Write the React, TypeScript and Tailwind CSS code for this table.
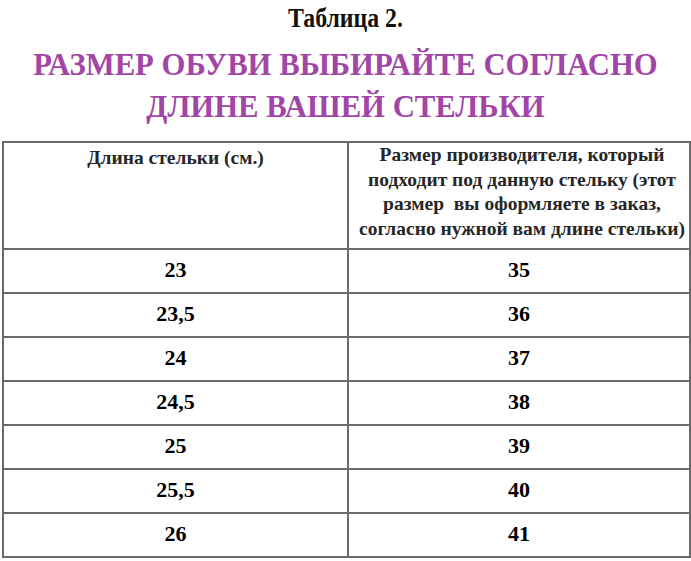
const rows: [string, string][] = [
  ["23", "35"],
  ["23,5", "36"],
  ["24", "37"],
  ["24,5", "38"],
  ["25", "39"],
  ["25,5", "40"],
  ["26", "41"],
];

export default function App() {
  return (
    <div className="w-[691px] h-[561px] overflow-hidden bg-white font-bold">
      <div className="font-[Liberation_Serif,serif]">
        <h1 className="pt-[1px] text-center text-[28px] leading-[34px] text-[#111] scale-x-85">Таблица 2.</h1>
        <h2 className="mt-[9px] text-center text-[31px] leading-[42px] text-[#a146a6] scale-x-[0.99]">
          РАЗМЕР ОБУВИ ВЫБИРАЙТЕ СОГЛАСНО
          <br />
          ДЛИНЕ ВАШЕЙ СТЕЛЬКИ
        </h2>
        <div className="mt-[13px] ml-[2px] w-[689px] border-x-2 border-b-2 border-[#6a6a6a]">
          <div className="grid h-[107px] grid-cols-[345px_1fr] border-t-2 border-[#6a6a6a] text-[#262626]">
            <div className="border-r-2 border-[#6a6a6a] pt-[3px] text-center text-[19.5px] leading-[24.5px]">
              Длина стельки (см.)
            </div>
            <div className="pl-[6px] text-center text-[19.5px] leading-[24.5px] whitespace-nowrap">
              Размер производителя, который
              <br />
              подходит под данную стельку (этот
              <br />
              размер&nbsp; вы оформляете в заказ,
              <br />
              согласно нужной вам длине стельки)
            </div>
          </div>
          {rows.map(([len, size]) => (
            <div
              key={len}
              className="grid h-[44px] grid-cols-[345px_1fr] border-t-2 border-[#6a6a6a] text-[22px] text-black"
            >
              <div className="flex items-center justify-center border-r-2 border-[#6a6a6a] pb-[4px]">{len}</div>
              <div className="flex items-center justify-center pb-[4px]">{size}</div>
            </div>
          ))}
        </div>
      </div>
    </div>
  );
}
